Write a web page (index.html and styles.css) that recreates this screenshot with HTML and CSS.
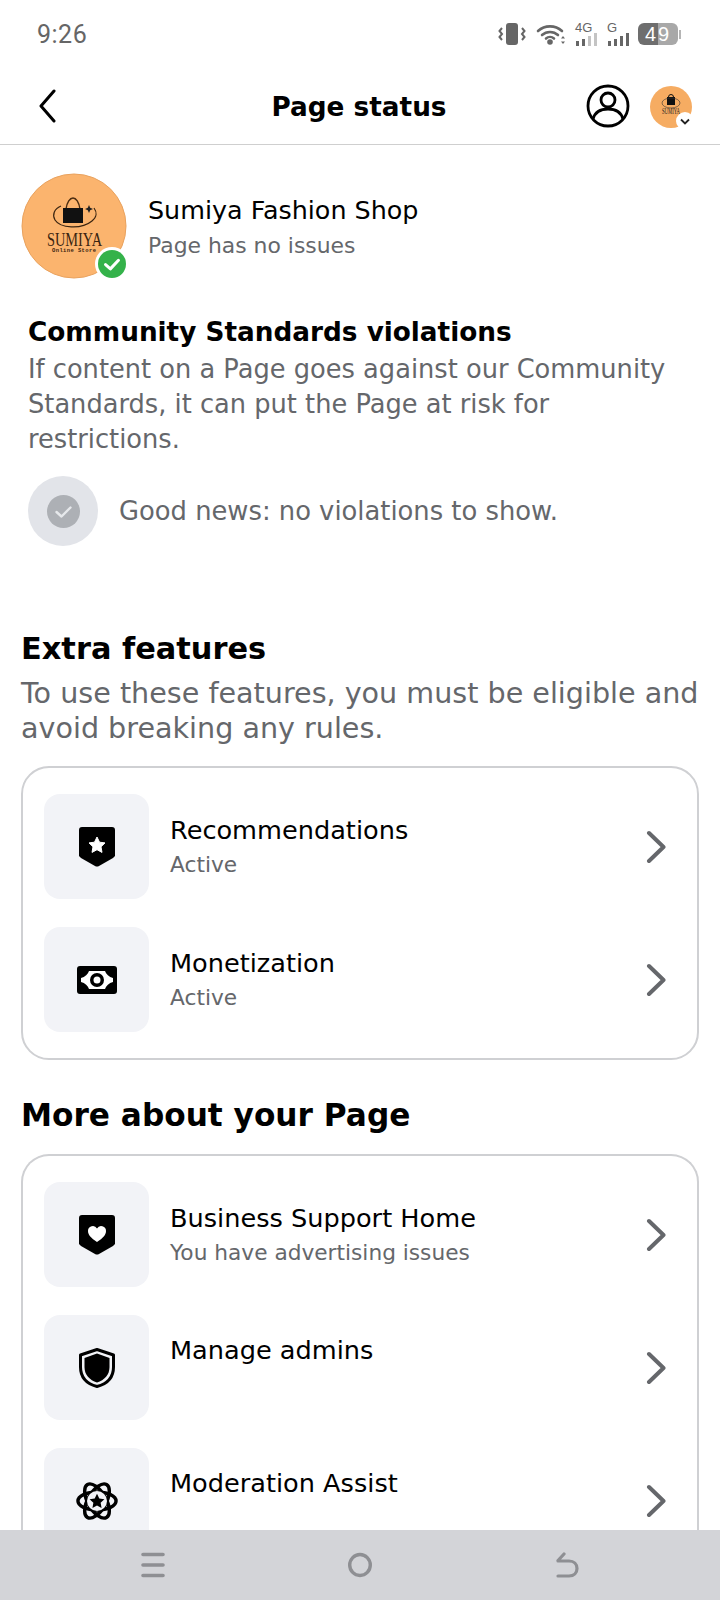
FILE: index.html
```html
<!DOCTYPE html>
<html lang="en">
<head>
    <meta charset="UTF-8">
    <meta name="viewport" content="width=device-width, initial-scale=1.0">
    <title>Page status</title>
    <link rel="stylesheet" href="styles.css">
</head>
<body>

    <div class="statusbar">
        <span class="time">9:26</span>
        <div class="status-icons">
            <svg class="vibrate" width="28" height="22" viewBox="0 0 28 22"><rect x="8" y="0" width="12" height="22" rx="3" fill="#666"/><path d="M4 5 1.500 8 4 11 1.500 14 4 17M24 5 26.500 8 24 11 26.500 14 24 17" fill="none" stroke="#666" stroke-width="2"/></svg>
            <svg width="30" height="22" viewBox="0 0 30 22"><path d="M2 8a18 18 0 0 1 24 0M6 12a12 12 0 0 1 16 0M10 15.500a6 6 0 0 1 8 0" fill="none" stroke="#666" stroke-width="2.600" stroke-linecap="round"/><circle cx="14" cy="19" r="2.800" fill="#666"/><path d="M27 13l2 2.500h-4zM27 21l2-2.500h-4z" fill="#666"/></svg>
            <div class="signal">
                <span class="signal-label">4G</span>
                <div class="bars"><i class="b1"></i><i class="b2"></i><i class="b3 off"></i><i class="b4 off"></i></div>
            </div>
            <div class="signal">
                <span class="signal-label">G</span>
                <div class="bars"><i class="b1"></i><i class="b2"></i><i class="b3"></i><i class="b4"></i></div>
            </div>
            <div class="battery"><span>49</span></div>
            <div class="battery-tip"></div>
        </div>
    </div>

    <header class="topbar">
        <svg class="back" width="20" height="34" viewBox="0 0 20 34"><path d="M16 2 3 17l13 15" fill="none" stroke="#000" stroke-width="3" stroke-linecap="round" stroke-linejoin="round"/></svg>
        <h1>Page status</h1>
        <svg class="profile" width="44" height="44" viewBox="0 0 44 44"><circle cx="22" cy="22" r="20" fill="none" stroke="#000" stroke-width="2.800"/><circle cx="22" cy="16" r="7" fill="none" stroke="#000" stroke-width="2.800"/><path d="M7 35c2-7 8-10 15-10s13 3 15 10" fill="none" stroke="#000" stroke-width="2.800"/></svg>
        <div class="mini-avatar">
            <svg width="42" height="42" viewBox="0 0 42 42">
                <circle cx="21" cy="21" r="21" fill="#f6ac62"/>
                <rect x="17" y="11" width="8" height="8" fill="#111"/>
                <path d="M18.500 11a2.500 2.500 0 0 1 5 0" fill="none" stroke="#111"/>
                <ellipse cx="21" cy="17" rx="9" ry="5" fill="none" stroke="#333" stroke-width=".6"/>
                <text x="21" y="28" text-anchor="middle" class="mini-logo" textLength="18" lengthAdjust="spacingAndGlyphs">SUMIYA</text>
                <circle cx="35" cy="35" r="9" fill="#fff"/>
                <path d="M31 33.500l4 4 4-4" fill="none" stroke="#222" stroke-width="1.800"/>
            </svg>
        </div>
    </header>

    <main class="content">
        <section class="page-head">
            <div class="avatar">
                <svg width="106" height="106" viewBox="0 0 106 106">
                    <circle cx="53" cy="53" r="52" fill="#fbb46e" stroke="#e9a25e"/>
                    <path d="M45 36c1-7 4-11 7-11s6 4 7 11" fill="none" stroke="#4a2c10" stroke-width="1.400"/>
                    <path d="M42 35h20v15H42z" fill="#111"/>
                    <path d="M40 33c-7 3-9 9-6 14 5 8 26 10 37 1 5-4 5-9 2-13" fill="none" stroke="#3a2410" stroke-width="1.200"/>
                    <path d="M68 32l1.200 2.800 2.800 1.200-2.800 1.200L68 40l-1.200-2.800L64 36l2.800-1.200z" fill="#222"/>
                    <text x="53.500" y="73" text-anchor="middle" class="logo-name" textLength="55" lengthAdjust="spacingAndGlyphs">SUMIYA</text>
                    <text x="53" y="79" text-anchor="middle" class="logo-sub" textLength="44">Online Store</text>
                </svg>
                <span class="ok-badge">
                    <svg width="28" height="28" viewBox="0 0 26 26"><circle cx="13" cy="13" r="13" fill="#34b24a"/><path d="M7 13.500l4.500 4L19 9.500" fill="none" stroke="#fff" stroke-width="2.800" stroke-linecap="round" stroke-linejoin="round"/></svg>
                </span>
            </div>
            <div class="page-info">
                <div class="page-name">Sumiya Fashion Shop</div>
                <div class="page-sub">Page has no issues</div>
            </div>
        </section>

        <section class="violations">
            <h2>Community Standards violations</h2>
            <p>If content on a Page goes against our Community Standards, it can put the Page at risk for restrictions.</p>
            <div class="good-news">
                <span class="good-icon">
                    <svg width="33" height="33" viewBox="0 0 33 33"><circle cx="16.500" cy="16.500" r="16.500" fill="#adb0b5"/><path d="M9.500 17l5 4.500 9-9" fill="none" stroke="#e6e8eb" stroke-width="2.400" stroke-linecap="round" stroke-linejoin="round"/></svg>
                </span>
                <span>Good news: no violations to show.</span>
            </div>
        </section>

        <section class="extra">
            <h3>Extra features</h3>
            <p>To use these features, you must be eligible and avoid breaking any rules.</p>
        </section>

        <div class="card">
            <div class="row">
                <div class="row-icon">
                    <svg width="36" height="40" viewBox="0 0 36 40"><path d="M3 0h30a3 3 0 0 1 3 3v26l-2 2-14 8a4 4 0 0 1-4 0L2 31l-2-2V3a3 3 0 0 1 3-3z"/><path d="M18 10l2.500 5.200 5.500.7-4 3.900 1 5.600-5-2.700-5 2.700 1-5.600-4-3.900 5.500-.7z" fill="#fff" stroke="#fff" stroke-linejoin="round"/></svg>
                </div>
                <div class="row-text">
                    <div class="row-title">Recommendations</div>
                    <div class="row-sub">Active</div>
                </div>
                <svg class="chevron" width="20" height="34" viewBox="0 0 20 34"><path d="M3 3 17.500 17 3 31" fill="none" stroke="#65676b" stroke-width="4" stroke-linecap="round" stroke-linejoin="round"/></svg>
            </div>
            <div class="row">
                <div class="row-icon">
                    <svg width="40" height="28" viewBox="0 0 40 28"><rect width="40" height="28" rx="3"/><path d="M12 5h16c1 3 4 6 8 7v4c-4 1-7 4-8 7H12c-1-3-4-6-8-7v-4c4-1 7-4 8-7z" fill="#fff"/><circle cx="20" cy="14" r="7"/><circle cx="20" cy="14" r="3.500" fill="#fff"/></svg>
                </div>
                <div class="row-text">
                    <div class="row-title">Monetization</div>
                    <div class="row-sub">Active</div>
                </div>
                <svg class="chevron" width="20" height="34" viewBox="0 0 20 34"><path d="M3 3 17.500 17 3 31" fill="none" stroke="#65676b" stroke-width="4" stroke-linecap="round" stroke-linejoin="round"/></svg>
            </div>
        </div>

        <h3 class="more-title">More about your Page</h3>

        <div class="card card-open">
            <div class="row">
                <div class="row-icon">
                    <svg width="36" height="40" viewBox="0 0 36 40"><path d="M3 0h30a3 3 0 0 1 3 3v26l-2 2-14 8a4 4 0 0 1-4 0L2 31l-2-2V3a3 3 0 0 1 3-3z"/><path d="M18 27c-6-4-9-7-9-11a4.800 4.800 0 0 1 9-2.400A4.800 4.800 0 0 1 27 16c0 4-3 7-9 11z" fill="#fff"/></svg>
                </div>
                <div class="row-text">
                    <div class="row-title">Business Support Home</div>
                    <div class="row-sub">You have advertising issues</div>
                </div>
                <svg class="chevron" width="20" height="34" viewBox="0 0 20 34"><path d="M3 3 17.500 17 3 31" fill="none" stroke="#65676b" stroke-width="4" stroke-linecap="round" stroke-linejoin="round"/></svg>
            </div>
            <div class="row row-top">
                <div class="row-icon">
                    <svg width="36" height="40" viewBox="0 0 36 40"><path d="M18 1.500 34.500 7v12c0 11-7 17-16.500 19.500C8.500 36 1.500 30 1.500 19V7z" fill="none" stroke="#000" stroke-width="3" stroke-linejoin="round"/><path d="M18 5.500 30.500 10v9c0 8-5 13-12.500 15.500C10.500 32 5.500 27 5.500 19v-9z"/></svg>
                </div>
                <div class="row-text">
                    <div class="row-title">Manage admins</div>
                </div>
                <svg class="chevron" width="20" height="34" viewBox="0 0 20 34"><path d="M3 3 17.500 17 3 31" fill="none" stroke="#65676b" stroke-width="4" stroke-linecap="round" stroke-linejoin="round"/></svg>
            </div>
            <div class="row row-top">
                <div class="row-icon">
                    <svg width="42" height="40" viewBox="0 0 44 42"><g fill="none" stroke="#000" stroke-width="3.600"><ellipse cx="22" cy="21" rx="20" ry="9.500"/><ellipse cx="22" cy="21" rx="20" ry="9.500" transform="rotate(60 22 21)"/><ellipse cx="22" cy="21" rx="20" ry="9.500" transform="rotate(120 22 21)"/></g><circle cx="22" cy="21" r="10.500" fill="#f2f3f7"/><path d="M22 13.500l2.400 5 5.400.7-4 3.700 1 5.400-4.800-2.700-4.800 2.700 1-5.400-4-3.700 5.400-.7z"/></svg>
                </div>
                <div class="row-text">
                    <div class="row-title">Moderation Assist</div>
                </div>
                <svg class="chevron" width="20" height="34" viewBox="0 0 20 34"><path d="M3 3 17.500 17 3 31" fill="none" stroke="#65676b" stroke-width="4" stroke-linecap="round" stroke-linejoin="round"/></svg>
            </div>
        </div>
    </main>

    <nav class="navbar">
        <svg width="24" height="26" viewBox="0 0 24 26"><path d="M2 2.500h20M2 13h20M2 23.500h20" stroke="#8e8f93" stroke-width="3.600" stroke-linecap="round"/></svg>
        <svg width="24" height="26" viewBox="0 0 24 26"><ellipse cx="12" cy="13" rx="10.300" ry="10.500" fill="none" stroke="#8e8f93" stroke-width="3.400"/></svg>
        <svg width="24" height="26" viewBox="0 0 24 26"><path d="M3 24h11c5 0 8-3 8-7.500S19 9 14 9H3M9 2 3 8.500" fill="none" stroke="#8e8f93" stroke-width="3.200" stroke-linecap="round"/></svg>
    </nav>

</body>
</html>
```

FILE: styles.css
```css
* {
    margin: 0;
    padding: 0;
    box-sizing: border-box;
}

body {
    font-family: 'DejaVu Sans', sans-serif;
    background-color: #ffffff;
    color: #000000;
    width: 720px;
    height: 1600px;
    display: flex;
    flex-direction: column;
    overflow: hidden;
}

/* Status bar */
.statusbar {
    height: 68px;
    flex: none;
    display: flex;
    justify-content: space-between;
    align-items: center;
    padding: 0 39px 0 37px;
}

.time {
    font-family: 'Roboto', sans-serif;
    font-size: 25px;
    color: #666666;
    letter-spacing: 0.5px;
}

.status-icons {
    display: flex;
    align-items: center;
    gap: 8px;
}

.vibrate {
    margin-right: 2px;
}

.signal {
    position: relative;
    width: 24px;
    height: 24px;
}

.signal-label {
    position: absolute;
    left: 1px;
    top: -2px;
    font-family: 'Liberation Sans', sans-serif;
    font-size: 13px;
    color: #666666;
}

.bars {
    position: absolute;
    left: 2px;
    bottom: 0;
    display: flex;
    align-items: flex-end;
    gap: 3px;
}

.bars i {
    display: block;
    width: 3px;
    background: #666666;
}

.bars i.off {
    background: #c4c4c4;
}

.bars .b1 { height: 5px; }
.bars .b2 { height: 7px; }
.bars .b3 { height: 10px; }
.bars .b4 { height: 13px; }

.battery {
    width: 40px;
    height: 22px;
    border-radius: 6px;
    background: linear-gradient(to right, #6e6e6e 50%, #a8a8a8 50%);
    display: flex;
    justify-content: center;
    align-items: center;
    color: #ffffff;
    font-family: 'Liberation Sans', sans-serif;
    font-size: 20px;
    letter-spacing: 2px;
}

.battery-tip {
    width: 2px;
    height: 9px;
    background: #b5b5b5;
    margin-left: -7px;
}

/* Top bar */
.topbar {
    height: 77px;
    flex: none;
    display: flex;
    align-items: center;
    padding: 0 28px 0 38px;
    border-bottom: 1px solid #cfcfcf;
}

.topbar h1 {
    flex: 1;
    text-align: center;
    font-size: 26.3px;
    font-weight: bold;
    padding: 2px 0 0 74px;
}

.profile {
    margin-right: 20px;
}

.mini-avatar {
    width: 42px;
    height: 42px;
    margin-top: 2px;
}

.mini-logo {
    font-family: 'Liberation Serif', serif;
    font-size: 8px;
    fill: #222222;
}

/* Main content */
.content {
    flex: 1;
    min-height: 0;
    overflow: hidden;
    padding: 28px 21px 0 21px;
}

.page-head {
    display: flex;
    align-items: center;
    gap: 21px;
}

.avatar {
    position: relative;
    width: 106px;
    height: 106px;
    flex: none;
}

.logo-name {
    font-family: 'Liberation Serif', serif;
    font-size: 18px;
    fill: #3a2410;
}

.logo-sub {
    font-family: 'Liberation Mono', monospace;
    font-size: 5.500px;
    font-weight: bold;
    fill: #3a2410;
}

.ok-badge {
    position: absolute;
    right: -2px;
    bottom: -2px;
    width: 34px;
    height: 34px;
    border-radius: 50%;
    background: #ffffff;
    display: flex;
    align-items: center;
    justify-content: center;
}

.page-name {
    font-size: 25.400px;
    line-height: 36px;
}

.page-sub {
    font-size: 21.900px;
    line-height: 30px;
    color: #65676b;
    margin-top: 3px;
}

.violations {
    margin-top: 36px;
    padding-left: 7px;
}

.violations h2 {
    font-size: 26.300px;
    line-height: 34px;
    font-weight: bold;
}

.violations p {
    font-size: 25.700px;
    line-height: 35px;
    color: #65676b;
    margin-top: 3px;
}

.good-news {
    display: flex;
    align-items: center;
    gap: 21px;
    margin-top: 19px;
    font-size: 25.800px;
    color: #65676b;
}

.good-icon {
    width: 70px;
    height: 70px;
    border-radius: 50%;
    background: #e2e4e9;
    display: flex;
    align-items: center;
    justify-content: center;
    flex: none;
}

.extra {
    margin-top: 81px;
}

.extra h3 {
    font-size: 30.400px;
    line-height: 44px;
    font-weight: bold;
}

.extra p {
    font-size: 28.600px;
    line-height: 35px;
    color: #65676b;
    margin-top: 5px;
}

.more-title {
    font-size: 31.200px;
    line-height: 44px;
    font-weight: bold;
    margin-top: 33px;
}

.card {
    margin-top: 20px;
    border: 2px solid #cfd0d3;
    border-radius: 28px;
    padding: 26px 20px 26px 21px;
    display: flex;
    flex-direction: column;
    gap: 28px;
}

.card-open {
    border-bottom: none;
    border-bottom-left-radius: 0;
    border-bottom-right-radius: 0;
    margin-top: 17px;
    padding-bottom: 40px;
}

.row {
    display: flex;
    align-items: center;
}

.row-icon {
    width: 105px;
    height: 105px;
    flex: none;
    border-radius: 16px;
    background: #f2f3f7;
    display: flex;
    align-items: center;
    justify-content: center;
}

.row-text {
    flex: 1;
    padding: 0 0 2px 21px;
}

.row-top .row-text {
    align-self: flex-start;
    padding-top: 17px;
}

.row-title {
    font-size: 25.600px;
    line-height: 36px;
}

.row-sub {
    font-size: 21.700px;
    line-height: 30px;
    color: #65676b;
    margin-top: 2px;
}

.chevron {
    margin-right: 11px;
}

/* Android nav */
.navbar {
    height: 70px;
    flex: none;
    background: #d3d4d8;
    display: flex;
    justify-content: space-between;
    align-items: center;
    padding: 0 141px;
}
```
